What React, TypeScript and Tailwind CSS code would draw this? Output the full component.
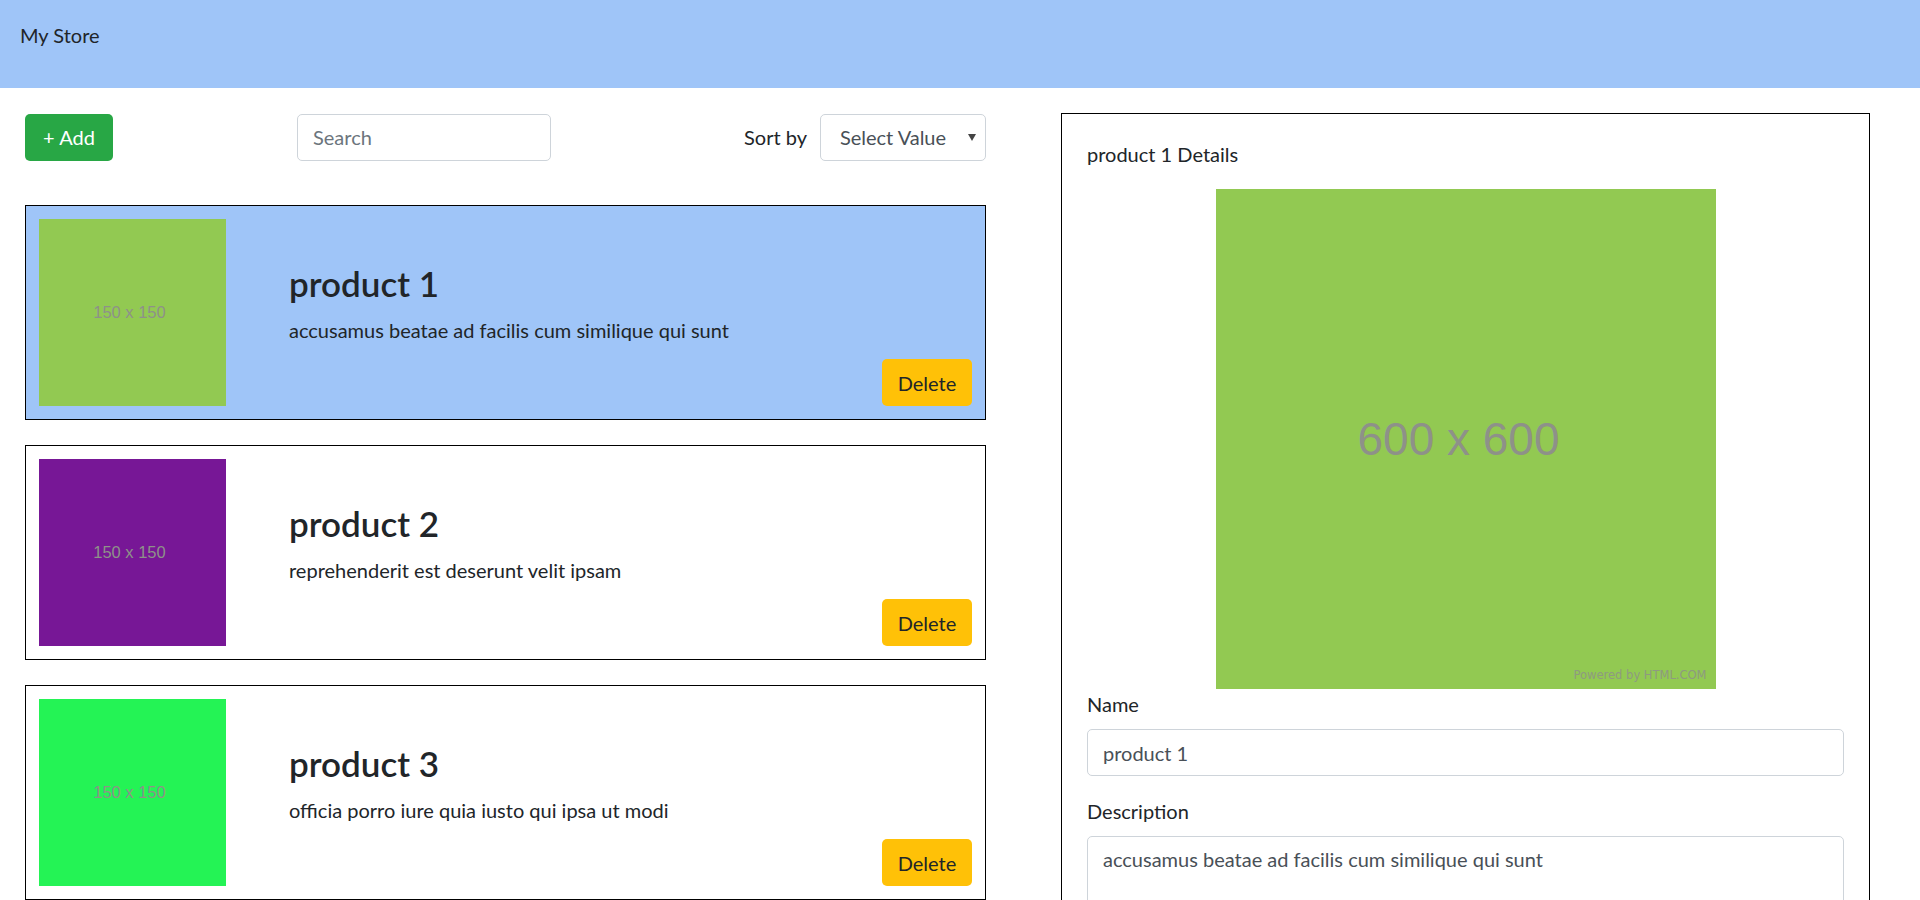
import React from "react";

const FONT = "font-['Lato',sans-serif]";

const products = [
  { name: "product 1", desc: "accusamus beatae ad facilis cum similique qui sunt", color: "bg-[#92c952]", selected: true },
  { name: "product 2", desc: "reprehenderit est deserunt velit ipsam", color: "bg-[#771796]", selected: false },
  { name: "product 3", desc: "officia porro iure quia iusto qui ipsa ut modi", color: "bg-[#24f355]", selected: false },
];

function Placeholder({ label, className, big }: { label: string; className: string; big?: boolean }) {
  return (
    <div className={`relative flex shrink-0 items-center justify-center ${className}`}>
      <span
        className={`relative font-['Liberation_Sans',Arial,sans-serif] text-[#8e9189] ${
          big ? "right-[7px] text-[46px]" : "right-[3px] text-[16.5px]"
        }`}
      >
        {label}
      </span>
      {big && (
        <span className="absolute bottom-[5px] right-[9px] font-['DejaVu_Sans',sans-serif] text-[11.5px] text-[#8e9a80]">
          Powered by HTML.COM
        </span>
      )}
    </div>
  );
}

export default function App() {
  return (
    <div className={`relative min-h-screen bg-white text-[#212529] ${FONT}`}>
      <header className="h-[88px] bg-[#9fc5f8] pl-[20px] pt-[20px] text-[20px] leading-[30px]">My Store</header>
      <main className="flex pl-[25px] pt-[25px]">
        <section className="w-[961px] shrink-0">
          <div className="flex h-[48px] items-center">
            <button className="h-[47px] w-[88px] rounded-[5px] bg-[#28a745] text-[20px] leading-[30px] text-white">
              + Add
            </button>
            <input
              placeholder="Search"
              className="ml-[184px] h-[47px] w-[254px] rounded-[5px] border border-[#ced4da] px-[15px] text-[20px] text-[#495057] outline-none placeholder:text-[#6c757d]"
            />
            <div className="flex-1" />
            <span className="text-[20px] leading-[30px]">Sort by</span>
            <div className="relative ml-[13px] flex h-[47px] w-[166px] items-center justify-center rounded-[5px] border border-[#ced4da] pl-[15px] pr-[35px] text-[20px] text-[#495057]">
              Select Value
              <svg className="absolute right-[9px] top-[19px]" width="8" height="7" viewBox="0 0 8 7">
                <path d="M0 0 H8 L4 7 Z" fill="#444" />
              </svg>
            </div>
          </div>
          <div className="mt-[44px] flex flex-col gap-[25px]">
            {products.map((p) => (
              <div
                key={p.name}
                className={`flex h-[215px] border border-black p-[13px] ${p.selected ? "bg-[#9fc5f8]" : "bg-white"}`}
              >
                <Placeholder label="150 x 150" className={`h-[187px] w-[187px] ${p.color}`} />
                <div className="ml-[63px] flex flex-1 flex-col pt-[43px]">
                  <h3 className="mb-[11px] text-[35px] font-semibold leading-[42px]">{p.name}</h3>
                  <p className="text-[20px] leading-[30px]">{p.desc}</p>
                  <button className="mt-auto h-[47px] w-[90px] self-end rounded-[5px] bg-[#ffc107] text-[20px] leading-[30px] text-[#212529]">
                    Delete
                  </button>
                </div>
              </div>
            ))}
          </div>
        </section>
        <aside className="ml-[75px] w-[809px] shrink-0 border border-black p-[25px]">
          <div className="text-[20px] leading-[30px]">product 1 Details</div>
          <Placeholder label="600 x 600" big className="mx-auto mt-[20px] h-[500px] w-[500px] bg-[#92c952]" />
          <label className="block text-[20px] leading-[30px]">Name</label>
          <input
            defaultValue="product 1"
            className="mt-[10px] block h-[47px] w-full rounded-[5px] border border-[#ced4da] px-[15px] text-[20px] text-[#495057] outline-none"
          />
          <label className="mt-[20px] block text-[20px] leading-[30px]">Description</label>
          <textarea
            defaultValue="accusamus beatae ad facilis cum similique qui sunt"
            rows={3}
            className="mt-[10px] block h-[107px] w-full resize-none rounded-[5px] border border-[#ced4da] px-[15px] py-[7px] text-[20px] leading-[30px] text-[#495057] outline-none"
          />
        </aside>
      </main>
    </div>
  );
}
